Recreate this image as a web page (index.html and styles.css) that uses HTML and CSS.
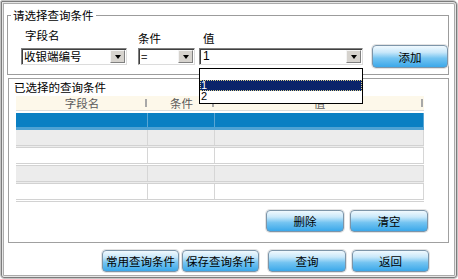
FILE: index.html
```html
<!DOCTYPE html>
<html lang="zh-CN">
<head>
<meta charset="utf-8">
<title>查询条件</title>
<link rel="stylesheet" href="styles.css">
</head>
<body>
<div class="window">
  <fieldset class="criteria">
    <legend>请选择查询条件</legend>
    <div class="fields">
      <div class="field field-name">
        <span class="label">字段名</span>
        <div class="select">收银端编号<span class="arrow"></span></div>
      </div>
      <div class="field field-op">
        <span class="label">条件</span>
        <div class="select">=<span class="arrow"></span></div>
      </div>
      <div class="field field-value">
        <span class="label">值</span>
        <div class="select latin">1<span class="arrow"></span></div>
      </div>
      <button class="btn btn-add">添加</button>
    </div>
  </fieldset>

  <section class="selected">
    <div class="title">已选择的查询条件</div>
    <div class="grid">
      <div class="grid-head">
        <div class="cell">字段名</div>
        <div class="cell">条件</div>
        <div class="cell">值</div>
      </div>
      <div class="row row-active"><div class="cell"></div><div class="cell"></div><div class="cell"></div></div>
      <div class="row row-alt"><div class="cell"></div><div class="cell"></div><div class="cell"></div></div>
      <div class="row"><div class="cell"></div><div class="cell"></div><div class="cell"></div></div>
      <div class="row row-alt"><div class="cell"></div><div class="cell"></div><div class="cell"></div></div>
      <div class="row"><div class="cell"></div><div class="cell"></div><div class="cell"></div></div>
    </div>
    <div class="actions">
      <button class="btn btn-del">删除</button>
      <button class="btn btn-clear">清空</button>
    </div>
  </section>

  <div class="footer">
    <button class="btn btn-common">常用查询条件</button>
    <button class="btn btn-save">保存查询条件</button>
    <button class="btn btn-query">查询</button>
    <button class="btn btn-back">返回</button>
  </div>

  <ul class="dropdown">
    <li class="opt opt-blank"></li>
    <li class="opt opt-selected">1</li>
    <li class="opt opt-last">2</li>
  </ul>
</div>
</body>
</html>
```

FILE: styles.css
```css
* { box-sizing: border-box; }
html, body { margin: 0; padding: 0; background: #fff; }
body {
  font-family: "Noto Sans CJK SC", "Noto Sans", sans-serif;
  font-size: 11.5px;
  color: #000;
}

.window {
  position: relative;
  width: 458px;
  height: 279px;
  border: 1px solid #c6c6c6;
  border-radius: 2px 5px 4px 4px;
  box-shadow: inset 0 0 0 1px #7c7c7c, inset 0 0 0 2px #e6e6e6, inset 0 0 0 3px #ababab;
  padding: 6px 8px 0 6px;
}

/* group 1 */
.criteria {
  margin: 0;
  padding: 0 0 6px 0;
  border: 1px solid #9c9c9c;
  min-width: 0;
}
.criteria legend {
  margin-left: 3px;
  padding: 0 2px;
  line-height: 16px;
}
.fields {
  display: flex;
  align-items: flex-end;
  padding: 5px 0 0 13px;
}
.field {
  display: flex;
  flex-direction: column;
  padding-bottom: 3px;
}
.label { line-height: 14px; padding-left: 4px; }
.field-name .label { margin-bottom: 6px; }
.field-op .label, .field-value .label { margin-bottom: 3px; }
.field-op .label { padding-left: 0; }
.field-name { width: 106px; }
.field-op { width: 57px; margin-left: 11px; }
.field-value { width: 164px; margin-left: 4px; }

.select {
  position: relative;
  height: 17px;
  border: 1px solid;
  border-color: #808080 #dcdcdc #dcdcdc #808080;
  box-shadow: inset 1px 1px 0 #404040;
  background: #fff;
  line-height: 15px;
  padding-left: 2px;
  white-space: nowrap;
}
.select.latin { font-family: "Liberation Sans", sans-serif; font-size: 12px; padding-left: 3px; }
.arrow {
  position: absolute;
  right: 1px;
  top: 1px;
  width: 15px;
  height: 13px;
  background: #d6d3ce;
  border: 1px solid;
  border-color: #f4f4f4 #808080 #808080 #f4f4f4;
  display: flex;
  align-items: center;
  justify-content: center;
}
.arrow::before {
  content: "";
  width: 0; height: 0;
  border-left: 3.5px solid transparent;
  border-right: 3.5px solid transparent;
  border-top: 4px solid #000;
}

/* buttons */
.btn {
  width: 77px;
  height: 22px;
  padding: 0;
  border: 1px solid #7d95a9;
  border-radius: 4px;
  background: linear-gradient(to bottom, #f0f9fe 0%, #c9e8fa 30%, #74c4f1 58%, #3ba8ea 100%);
  box-shadow: 0 0 0 1px #e3e3e3;
  font: inherit;
  color: #000;
  line-height: 20px;
  text-align: center;
}
.btn-add { width: 76px; height: 23px; margin-left: 9px; }

/* group 2 */
.selected {
  margin: 3px 0 0 1px;
  border: 1px solid #a0a0a0;
  padding: 0 0 10px 5px;
}
.title { line-height: 16px; }
.grid { margin: 1px 0 0 2px; width: 408px; }
.grid-head, .row {
  display: grid;
  grid-template-columns: 132px 67px 1fr;
}
.grid-head {
  height: 15px;
  background: #fdf8ea;
  border-bottom: 1px solid #dcdcdc;
  margin-bottom: 2px;
  color: #5a5a5a;
}
.grid-head .cell {
  text-align: center;
  line-height: 14px;
  background: linear-gradient(#a8a8a8, #a8a8a8) right 1px center / 2px 8px no-repeat;
}
.row {
  height: 18px;
  border-bottom: 3px double #d2d2d2;
}
.row .cell { border-right: 1px solid #d6d6d6; }
.row-alt { background: #ececec; }
.row-active {
  height: 17px;
  background: #0a7fc3;
  border-bottom: 3px solid #4fa2d4;
}
.row-active .cell { border-right-color: #5aa6d4; }

.actions {
  display: flex;
  justify-content: flex-end;
  gap: 6px;
  margin-top: 8px;
  padding-right: 20px;
}
.actions .btn { width: 78px; }

.footer {
  display: flex;
  justify-content: flex-end;
  margin-top: 7px;
  padding-right: 20px;
}
.btn-save { margin-left: 3px; }
.btn-query { margin-left: 9px; width: 78px; }
.btn-back { margin-left: 6px; }

/* open dropdown */
.dropdown {
  position: absolute;
  left: 198px;
  top: 67px;
  width: 164px;
  margin: 0;
  padding: 0;
  list-style: none;
  background: #fff;
  border: 1px solid #000;
  font-family: "Liberation Sans", sans-serif;
  font-size: 11px;
}
.opt { height: 11px; line-height: 11px; padding-left: 1px; }
.opt-last { height: 12px; }
.opt-selected {
  background: #0a246a;
  color: #fff;
  outline: 1px dotted #d8cf8a;
  outline-offset: -1px;
}
```
